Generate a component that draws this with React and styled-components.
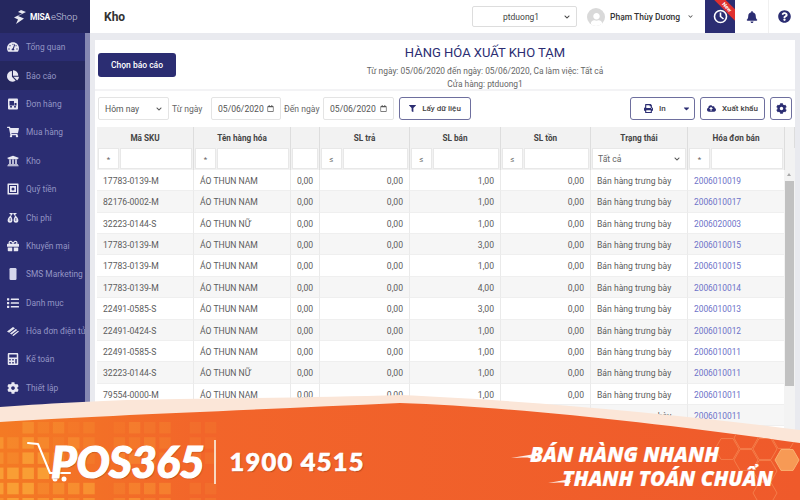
import React from 'react';
import styled, { createGlobalStyle } from 'styled-components';
import {
  FaTachometerAlt, FaChartPie, FaShoppingCart, FaUniversity, FaGift,
  FaList, FaCalculator, FaCog, FaBell, FaQuestionCircle, FaPrint, FaCloudUploadAlt,
  FaFilter, FaCaretDown, FaRegCalendar, FaChevronDown, FaUser
} from 'react-icons/fa';

const navy = '#2b2d72';
const Global = createGlobalStyle`
  html, body { margin: 0; padding: 0; background: #e9eaef; }
  * { box-sizing: border-box; }
  body { font-family: Roboto, "Liberation Sans", sans-serif; color: #555; }
`;
const Page = styled.div`
  position: relative; width: 800px; height: 500px; overflow: hidden;
  display: grid; grid-template-columns: 90px 1fr;
`;
const Side = styled.aside`
  background: ${navy}; display: flex; flex-direction: column; height: 500px; position: relative;
`;
const Brand = styled.div`
  height: 33px; background: #25275f; display: flex; align-items: center; gap: 1px; padding-left: 13px;
  color: #d8d9e8; flex: none;
  b { font-weight: 700; font-size: 8.5px; color: #fff; margin-left: 1px; letter-spacing: -.2px; }
  span { font-weight: 300; font-size: 9.5px; color: #cfd0e2; }
`;
const SideScroll = styled.div`
  width: 4.5px; background: #8587b2; height: 467px; margin-right: .5px;
`;
const SideBody = styled.div`
  flex: 1; display: grid; grid-template-columns: 85px 5px; min-height: 0;
`;
const Menu = styled.nav`
  display: flex; flex-direction: column; overflow: hidden;
`;
const MenuItem = styled.div`
  height: 28.4px; flex: none; display: flex; align-items: center; padding-left: 7px; gap: 7px;
  font-size: 8.4px; color: #9395c4; white-space: nowrap; width: 90px;
  background: ${p => (p.$active ? '#25275f' : 'transparent')};
  svg { color: #e8e8f2; width: 12px; height: 12px; flex: none; }
`;
const Main = styled.main`
  min-width: 0; display: flex; flex-direction: column;
`;
const Top = styled.header`
  height: 33px; background: #fff; display: flex; align-items: center; padding-left: 14px; flex: none;
`;
const Title = styled.h1`
  margin: 0; font-size: 12px; font-weight: 700; color: #333; flex: 1;
`;
const StoreSelect = styled.div`
  width: 105px; height: 21px; border: 1px solid #ddd; border-radius: 2px; display: flex; align-items: center;
  font-size: 8.5px; color: #444; padding: 0 6px 0 30px; justify-content: space-between;
  svg { width: 6px; height: 6px; color: #444; }
`;
const Avatar = styled.div`
  width: 18px; height: 18px; border-radius: 50%; background: #d9d9d9; margin-left: 10px; display: flex;
  align-items: flex-end; justify-content: center; overflow: hidden; color: #fff; flex: none;
  svg { width: 13px; height: 13px; }
`;
const UserName = styled.div`
  font-size: 8.5px; font-weight: 500; color: #333; margin-left: 5px; width: 95px; display: flex; gap: 8px; align-items: center; white-space: nowrap;
  svg { width: 5px; height: 5px; color: #555; }
`;
const Clock = styled.div`
  width: 30px; height: 33px; background: ${navy}; position: relative; overflow: hidden; display: flex;
  align-items: center; justify-content: center; flex: none;
`;
const Ribbon = styled.div`
  position: absolute; top: 3px; right: -10px; width: 36px; height: 8px; background: #e0302f; color: #fff;
  font-size: 5.5px; font-weight: 700; text-align: center; line-height: 8px; transform: rotate(45deg);
`;
const IconCell = styled.div`
  width: ${p => p.$w}px; height: 33px; display: flex; align-items: center; justify-content: center; flex: none;
  color: ${navy}; border-right: ${p => (p.$sep ? '1px solid #f0f0f0' : 'none')};
  svg { width: ${p => p.$size || 12}px; height: ${p => p.$size || 12}px; }
`;
const Card = styled.section`
  margin: 7px 5px 0 5px; background: #fff; flex: 1; min-height: 0; display: flex; flex-direction: column;
`;
const Head = styled.div`
  height: 51px; flex: none; position: relative; display: flex; border-bottom: 2px solid #f3f3f5; padding: 13px 0 0 3px;
`;
const ChooseBtn = styled.button`
  width: 78px; height: 24px; background: ${navy}; border: 0; border-radius: 3px; color: #fff; font: 500 8.5px Roboto, sans-serif; flex: none;
`;
const HeadText = styled.div`
  position: absolute; left: 80px; right: 0; top: 5px; text-align: center; color: #666; font-size: 8.4px; line-height: 13px;
  h2 { margin: 0 0 4px; font-size: 13px; line-height: 16px; font-weight: 400; color: ${navy}; }
`;
const Tools = styled.div`
  height: 36px; flex: none; display: flex; align-items: center; padding: 0 3px 1px; gap: 3px; font-size: 8.6px; color: #666;
`;
const Label = styled.span`
  width: 36px; flex: none; white-space: nowrap;
`;
const Field = styled.div`
  height: 23px; width: ${p => p.$w}px; border: 1px solid #e4e4e4; border-radius: 2px; display: flex; align-items: center;
  justify-content: space-between; padding: 0 6px; font-size: 8.6px; color: #555; flex: none;
  svg { width: ${p => p.$icon || 7}px; height: ${p => p.$icon || 7}px; color: #555; }
`;
const OutlineBtn = styled.div`
  height: 23px; width: ${p => p.$w}px; border: 1px solid #6e6f9e; border-radius: 3px; display: flex; align-items: center;
  justify-content: ${p => (p.$start ? 'flex-start' : 'center')}; padding-left: ${p => (p.$start ? 13 : 0)}px;
  gap: 6px; font-size: 8px; font-weight: 500; color: #444; flex: none;
  margin-left: ${p => p.$ml || 0}px;
  svg { width: ${p => p.$icon || 9}px; height: ${p => p.$icon || 9}px; color: ${navy}; }
`;
const Spacer = styled.span`
  width: ${p => p.$w}px;
`;
const Table = styled.div`
  flex: 1; min-height: 0; display: flex; flex-direction: column; padding-left: 2px; overflow: hidden;
`;
const cols = '97px 97px 29px 90px 91px 90px 97px 97px 10px';
const HeadRow = styled.div`
  display: grid; grid-template-columns: ${cols}; height: 21px; background: #f2f2f2; flex: none;
`;
const HeadCell = styled.div`
  border-right: 1px solid #ddd; display: flex; align-items: center; justify-content: center; font-size: 8.2px; font-weight: 700; color: #444;
`;
const FilterRow = styled.div`
  display: grid; grid-template-columns: ${cols}; height: 22px; background: #f2f2f2; flex: none;
`;
const FilterCell = styled.div`
  border-right: 1px solid #ddd; padding: 0 1px; display: flex; gap: 1px;
`;
const FilterOp = styled.div`
  width: 21px; height: 21px; background: #fff; border: 1px solid #e8e8e8; font-size: 8px; color: #666; display: flex; align-items: center; justify-content: center; flex: none; padding-top: 2px;
`;
const FilterInput = styled.div`
  flex: 1; height: 21px; background: #fff; border: 1px solid #e8e8e8; font-size: 8.6px; color: #666; padding: 0 5px; display: flex; align-items: center; justify-content: space-between;
  svg { width: 6px; height: 6px; color: #555; }
`;
const Body = styled.div`
  flex: 1; min-height: 0; position: relative; overflow: hidden;
`;
const Row = styled.div`
  display: grid; grid-template-columns: ${cols}; height: 21.36px; background: ${p => (p.$alt ? '#f6f6f6' : '#fff')};
`;
const Cell = styled.div`
  border-right: 1px solid #eaeaea; border-bottom: 1px solid #efefef; padding: 0 6px; font-size: ${p => (p.$link ? 8.4 : 8.6)}px; line-height: 23px; color: ${p => (p.$link ? '#6d72c8' : '#5c5c5c')};
  text-align: ${p => (p.$right ? 'right' : 'left')}; white-space: nowrap; overflow: hidden;
`;
const Track = styled.div`
  position: absolute; right: 0; top: 0; width: 11px; bottom: 0; background: #f3f3f3;
`;
const Arrow = styled.div`
  position: absolute; top: 3px; left: 3px; border: 2.5px solid transparent; border-top: 0; border-bottom: 3px solid #a8a8a8;
`;
const Thumb = styled.div`
  margin: 11px 1px 0; height: 205px; background: #c1c1c1;
`;
const Banner = styled.div`
  position: absolute; left: 0; right: 0; bottom: 0; height: 106px;
`;
const BannerArt = styled.svg`
  position: absolute; inset: 0; width: 800px; height: 106px; display: block;
`;
const BannerBody = styled.div`
  position: relative; height: 106px; display: flex; align-items: flex-start; padding: 45px 27px 0 51px; color: #fff;
`;
const Logo = styled.div`
  font-family: Lato, "Open Sans", sans-serif; font-weight: 900; font-style: italic; font-size: 44px; line-height: 44px;
  letter-spacing: -0.5px; width: 163px; flex: none; text-shadow: 1px 1px 1px rgba(120,40,10,.5); -webkit-text-stroke: 1.2px #fff;
`;
const Divider = styled.div`
  width: 1.5px; height: 44px; background: #f8d8c0; flex: none; margin-top: 1px;
`;
const Phone = styled.div`
  font-family: Lato, "Open Sans", sans-serif; font-weight: 900; font-size: 25.5px; line-height: 28px; margin: 8px 0 0 14px;
  letter-spacing: 1.2px; text-shadow: 1px 1px 1px rgba(120,40,10,.5); white-space: nowrap; -webkit-text-stroke: .6px #fff;
`;
const Slogan = styled.div`
  margin-left: auto; margin-top: 3px; display: flex; flex-direction: column; align-items: flex-end; gap: 0;
  font-family: "Open Sans", sans-serif; font-weight: 800; font-style: italic; font-size: 20.6px; line-height: 24px; white-space: nowrap;
  -webkit-text-stroke: .2px #fff;
  span:first-child { margin-right: 54px; }
`;

const Ic = ({ children }) => <svg viewBox="0 0 12 12" fill="currentColor">{children}</svg>;
const TruckBox = () => <Ic><rect x="1" y="0.5" width="10" height="11" rx="1" /><path d="M2.5 3h4.5v4.5H2.5z M7.5 5h2v2.5h-2z" fill={navy} /><circle cx="4" cy="8.7" r="1" fill={navy} /><circle cx="8" cy="8.7" r="1" fill={navy} /></Ic>;
const Safe = () => <Ic><path fillRule="evenodd" d="M1 .5h10a.5.5 0 0 1 .5.5v10a.5.5 0 0 1-.5.5H1a.5.5 0 0 1-.5-.5V1A.5.5 0 0 1 1 .5zM2 2v8h8V2zm1 1h6v6H3zm3 1.5a1.5 1.5 0 1 0 0 3 1.5 1.5 0 0 0 0-3z" /></Ic>;
const Bags = () => <Ic><path d="M2 1l2 2L3 4C1 6 0 8 1 10c1 1 3 1 4 0 1-2 0-4-1-6l1-1 1-2zM10 1L8 3l1 1c2 2 3 4 2 6-1 1-3 1-4 0-1-2 0-4 1-6L7 3 6 1z" /><path d="M3.2 6v3M8.8 6v3" stroke={navy} strokeWidth=".7" /></Ic>;
const Handset = () => <Ic><rect x="2.5" y="0" width="7" height="12" rx="1.2" fill="#d5d6ec" /></Ic>;
const Stack = () => <Ic><path d="M0 6.5 L6 2 L8 3.2 L2.2 7.8Z M3 8.4 L8.8 3.9 L10.3 5 L4.5 9.6Z M5.2 10.2 L11 5.8 L12 6.6 L6.5 11Z" /></Ic>;

const menu = [
  [FaTachometerAlt, 'Tổng quan'], [FaChartPie, 'Báo cáo', true], [TruckBox, 'Đơn hàng'], [FaShoppingCart, 'Mua hàng'],
  [FaUniversity, 'Kho'], [Safe, 'Quỹ tiền'], [Bags, 'Chi phí'], [FaGift, 'Khuyến mại'],
  [Handset, 'SMS Marketing'], [FaList, 'Danh mục'], [Stack, 'Hóa đơn điện tử'], [FaCalculator, 'Kế toán'], [FaCog, 'Thiết lập']
];
const N = 'ÁO THUN NAM', F = 'ÁO THUN NỮ';
const rows = [
  ['17783-0139-M', N, '1,00', '2006010019'], ['82176-0002-M', N, '1,00', '2006010017'], ['32223-0144-S', F, '1,00', '2006020003'],
  ['17783-0139-M', N, '3,00', '2006010015'], ['17783-0139-M', N, '1,00', '2006010015'], ['17783-0139-M', N, '4,00', '2006010014'],
  ['22491-0585-S', N, '3,00', '2006010013'], ['22491-0424-S', N, '1,00', '2006010012'], ['22491-0585-S', N, '1,00', '2006010011'],
  ['32223-0144-S', F, '1,00', '2006010011'], ['79554-0000-M', N, '1,00', '2006010011'], ['79554-0000-M', N, '1,00', '2006010011']
];
const heads = ['Mã SKU', 'Tên hàng hóa', '', 'SL trả', 'SL bán', 'SL tồn', 'Trạng thái', 'Hóa đơn bán', ''];

function Squares() {
  const out = [];
  for (let r = 0; r < 6; r++) for (let c = 0; c < 15; c++) {
    const h = (c * 7 + r * 13 + (c * r) % 5) % 5;
    if (h === 4 && c > 3) continue;
    if (r === 0 && c < 2) continue;
    const x = -8 + c * 15.2, y = 28 + r * 15.2;
    const fade = Math.max(0, 1 - c / 15) * (0.25 + r * 0.09) * (0.6 + h * 0.3);
    out.push(<rect key={r + '-' + c} x={x} y={y} width="11.5" height="11.5" fill="#fbab3a" opacity={Math.min(0.75, fade + (c > 8 ? 0.1 : 0))} />);
  }
  return out;
}
function Hex({ x, y, fill, stroke }) {
  const s = 12;
  const pts = [[-s, 0], [-s / 2, -s * 0.87], [s / 2, -s * 0.87], [s, 0], [s / 2, s * 0.87], [-s / 2, s * 0.87]].map(p => `${x + p[0]},${y + p[1]}`).join(' ');
  return <polygon points={pts} fill={fill || 'none'} stroke={stroke || '#f47d4a'} strokeWidth="1" />;
}

export default function App() {
  return (
    <>
      <Global />
      <Page>
        <Side>
          <Brand>
            <svg width="15" height="14" viewBox="0 0 15 14"><path d="M8 0 L13 2 L5 6 L11 8.5 L3 14 L5 9.5 L1 7.5 L9 3.5 L5 2Z" fill="#e8e8f0" /></svg>
            <b>MISA</b><span>eShop</span>
          </Brand>
          <SideBody>
            <Menu>
              {menu.map(([I, t, a]) => <MenuItem key={t} $active={a}><I />{t}</MenuItem>)}
            </Menu>
            <SideScroll />
          </SideBody>
        </Side>
        <Main>
          <Top>
            <Title>Kho</Title>
            <StoreSelect>ptduong1<FaChevronDown /></StoreSelect>
            <Avatar><FaUser /></Avatar>
            <UserName>Phạm Thùy Dương <FaChevronDown /></UserName>
            <Clock>
              <svg width="15" height="15" viewBox="0 0 15 15" fill="none" stroke="#fff" strokeWidth="1.6"><circle cx="7.5" cy="7.5" r="6" /><path d="M7.5 3.5V7.5L10.5 10" /></svg>
              <Ribbon>New</Ribbon>
            </Clock>
            <IconCell $w={34} $sep><FaBell /></IconCell>
            <IconCell $w={31} $size={13}><FaQuestionCircle /></IconCell>
          </Top>
          <Card>
            <Head>
              <ChooseBtn>Chọn báo cáo</ChooseBtn>
              <HeadText>
                <h2>HÀNG HÓA XUẤT KHO TẠM</h2>
                <div>Từ ngày: 05/06/2020 đến ngày: 05/06/2020, Ca làm việc: Tất cả</div>
                <div>Cửa hàng: ptduong1</div>
              </HeadText>
            </Head>
            <Tools>
              <Field $w={71} $icon={6}>Hôm nay<FaChevronDown /></Field>
              <Label>Từ ngày</Label>
              <Field $w={70}>05/06/2020<FaRegCalendar /></Field>
              <Label>Đến ngày</Label>
              <Field $w={71}>05/06/2020<FaRegCalendar /></Field>
              <OutlineBtn $w={72} $ml={2} $icon={7}><FaFilter />Lấy dữ liệu</OutlineBtn>
              <OutlineBtn $w={65} $ml={156} $start><FaPrint />In<Spacer $w={4} /><FaCaretDown /></OutlineBtn>
              <OutlineBtn $w={65} $ml={2}><FaCloudUploadAlt />Xuất khẩu</OutlineBtn>
              <OutlineBtn $w={22} $ml={2} $icon={11}><FaCog /></OutlineBtn>
            </Tools>
            <Table>
              <HeadRow>{heads.map((h, i) => <HeadCell key={i}>{h}</HeadCell>)}</HeadRow>
              <FilterRow>
                <FilterCell><FilterOp>*</FilterOp><FilterInput /></FilterCell>
                <FilterCell><FilterOp>*</FilterOp><FilterInput /></FilterCell>
                <FilterCell><FilterInput /></FilterCell>
                <FilterCell><FilterOp>≤</FilterOp><FilterInput /></FilterCell>
                <FilterCell><FilterOp>≤</FilterOp><FilterInput /></FilterCell>
                <FilterCell><FilterOp>≤</FilterOp><FilterInput /></FilterCell>
                <FilterCell><FilterInput>Tất cả<FaChevronDown /></FilterInput></FilterCell>
                <FilterCell><FilterOp>*</FilterOp><FilterInput /></FilterCell>
                <div />
              </FilterRow>
              <Body>
                {rows.map((r, i) => (
                  <Row key={i} $alt={i % 2 === 1}>
                    <Cell>{r[0]}</Cell><Cell>{r[1]}</Cell><Cell $right>0,00</Cell><Cell $right>0,00</Cell>
                    <Cell $right>{r[2]}</Cell><Cell $right>0,00</Cell><Cell>Bán hàng trưng bày</Cell><Cell $link>{r[3]}</Cell><div />
                  </Row>
                ))}
                <Track><Arrow /><Thumb /></Track>
              </Body>
            </Table>
          </Card>
        </Main>
        <Banner>
          <BannerArt viewBox="0 0 800 106">
            <defs>
              <linearGradient id="bannerOrange" x1="0" x2="1" y1="0" y2="0">
                <stop offset="0" stopColor="#f47a24" /><stop offset=".25" stopColor="#f2652a" /><stop offset="1" stopColor="#ef5a2b" />
              </linearGradient>
              <clipPath id="oc"><path d="M0 28 C90 22 250 16 400 9 C520 13 680 32 800 49 V106 H0Z" /></clipPath>
            </defs>
            <path d="M0 13 C60 9 100 6 180 5 C260 4 340 3 400 1 C520 6 680 20 800 36 V106 H0Z" fill="#fbe6d8" />
            <path d="M0 28 C90 22 250 16 400 9 C520 13 680 32 800 49 V106 H0Z" fill="url(#bannerOrange)" />
            <g clipPath="url(#oc)">
              <Squares />
              <Hex x={727} y={55} /><Hex x={746} y={44} /><Hex x={765} y={55} /><Hex x={784} y={44} />
              <Hex x={787} y={66} fill="#f79a55" stroke="#f9b070" /><Hex x={746} y={66} /><Hex x={765} y={77} /><Hex x={765} y={99} />
            </g>
            <g fill="none" stroke="#fff" strokeWidth="2" strokeLinecap="round" strokeLinejoin="round">
              <path d="M28 49 L38 50 L50 79 H70" />
            </g>
            <circle cx="55" cy="85" r="2.5" fill="#fff" /><circle cx="64" cy="85" r="2.5" fill="#fff" />
            <path d="M511 64 L535 60 L533 63 Z M522 62 L535 62 L533 65 Z" fill="#fff" opacity=".9" />
            <path d="M548 89 L571 85 L569 88 Z M558 87 L571 87 L569 90 Z" fill="#fff" opacity=".9" />
          </BannerArt>
          <BannerBody>
            <Logo>POS365</Logo>
            <Divider />
            <Phone>1900 4515</Phone>
            <Slogan><span>BÁN HÀNG NHANH</span><span>THANH TOÁN CHUẨN</span></Slogan>
          </BannerBody>
        </Banner>
      </Page>
    </>
  );
}
